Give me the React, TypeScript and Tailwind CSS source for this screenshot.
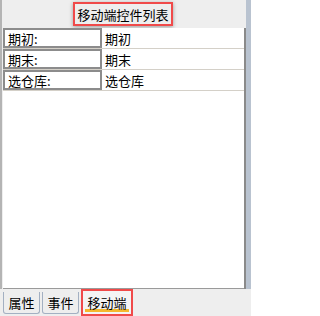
const rows = [
  { label: "期初:", value: "期初" },
  { label: "期末:", value: "期末" },
  { label: "选仓库:", value: "选仓库" },
];

const tabs = [
  { name: "属性", active: false },
  { name: "事件", active: false },
  { name: "移动端", active: true },
];

export default function App() {
  return (
    <div
      className="w-[251px] h-[316px] bg-[#eeeeee] flex flex-col text-black overflow-hidden"
      style={{ fontFamily: '"Noto Sans CJK SC", "Liberation Sans", sans-serif' }}
    >
      <div className="flex flex-1 min-h-0 border-l-2 border-[#b4b4b4]">
        <div className="flex-1 flex flex-col min-w-0">
          <header className="h-[28px] flex items-center justify-center shrink-0">
            <div className="h-[24px] px-[2px] flex items-center border-2 border-[#f04a4a] text-[13px] leading-none shadow-[0_1px_4px_rgba(0,0,0,0.35)] -ml-[2px]">
              移动端控件列表
            </div>
          </header>
          <div className="flex-1 flex min-h-0 ml-[1px]">
            <div className="flex-1 bg-white border-b border-[#9a9a9a] min-w-0">
              {rows.map((row) => (
                <div
                  key={row.label}
                  className="flex h-[21px] border-b border-[#d4d0c8]"
                >
                  <div className="w-[99px] shrink-0 border-2 border-[#8c8c8c] flex items-center pl-[3px] text-[13px] leading-none">
                    {row.label}
                  </div>
                  <div className="flex-1 flex items-center pl-[3px] text-[13px] leading-none">
                    {row.value}
                  </div>
                </div>
              ))}
            </div>
            <div className="w-[2px] bg-[#8a8a8a]" />
          </div>
        </div>
        <div className="w-[5px] shrink-0 bg-[#b9c3d0]" />
      </div>
      <div className="h-[27px] shrink-0 flex items-end gap-[2px] pl-[3px] pb-[2px]">
        {tabs.map((tab) =>
          tab.active ? (
            <div
              key={tab.name}
              className="h-[27px] w-[52px] flex items-center justify-center border-2 border-[#f04a4a] bg-[#f4f4f4] text-[13px] leading-none -mb-[2px]"
            >
              <span className="border-b-[3px] border-[#f5b82e] px-[2px] pt-[3px]">
                {tab.name}
              </span>
            </div>
          ) : (
            <div
              key={tab.name}
              className="h-[22px] w-[37px] flex items-center justify-center border border-t-0 border-[#a3b0c2] rounded-b-[3px] bg-[#eeeeee] text-[13px] leading-none"
            >
              {tab.name}
            </div>
          )
        )}
      </div>
    </div>
  );
}
